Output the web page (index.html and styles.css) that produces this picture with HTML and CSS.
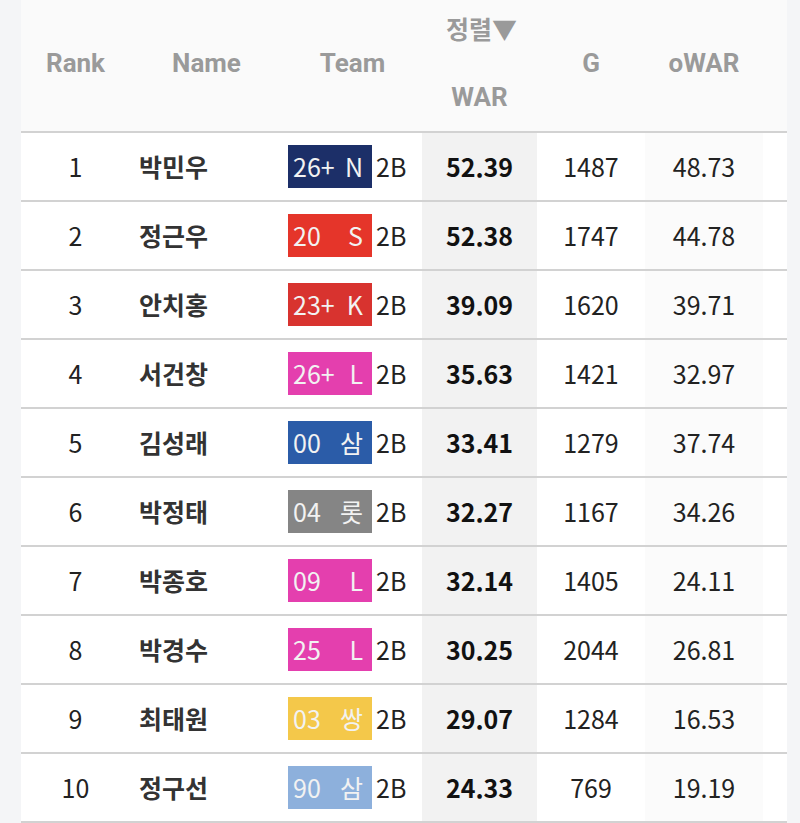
FILE: index.html
```html
<!DOCTYPE html>
<html lang="ko">
<head>
<meta charset="utf-8">
<link rel="stylesheet" href="styles.css">
</head>
<body>
<div class="board">
  <div class="row head">
    <div class="c rank">Rank</div>
    <div class="c name">Name</div>
    <div class="c team">Team</div>
    <div class="c war"><span class="sort">정렬▼</span><span>WAR</span></div>
    <div class="c g">G</div>
    <div class="c owar">oWAR</div>
    <div class="c pad"></div>
  </div>
  <div class="row"><div class="c rank">1</div><div class="c name">박민우</div><div class="c team"><span class="badge nc"><span class="num">26+</span><span>N</span></span><span class="pos">2B</span></div><div class="c war">52.39</div><div class="c g">1487</div><div class="c owar">48.73</div><div class="c pad"></div></div>
  <div class="row"><div class="c rank">2</div><div class="c name">정근우</div><div class="c team"><span class="badge sk"><span class="num">20</span><span>S</span></span><span class="pos">2B</span></div><div class="c war">52.38</div><div class="c g">1747</div><div class="c owar">44.78</div><div class="c pad"></div></div>
  <div class="row"><div class="c rank">3</div><div class="c name">안치홍</div><div class="c team"><span class="badge kia"><span class="num">23+</span><span>K</span></span><span class="pos">2B</span></div><div class="c war">39.09</div><div class="c g">1620</div><div class="c owar">39.71</div><div class="c pad"></div></div>
  <div class="row"><div class="c rank">4</div><div class="c name">서건창</div><div class="c team"><span class="badge lg"><span class="num">26+</span><span>L</span></span><span class="pos">2B</span></div><div class="c war">35.63</div><div class="c g">1421</div><div class="c owar">32.97</div><div class="c pad"></div></div>
  <div class="row"><div class="c rank">5</div><div class="c name">김성래</div><div class="c team"><span class="badge ss"><span class="num">00</span><span>삼</span></span><span class="pos">2B</span></div><div class="c war">33.41</div><div class="c g">1279</div><div class="c owar">37.74</div><div class="c pad"></div></div>
  <div class="row"><div class="c rank">6</div><div class="c name">박정태</div><div class="c team"><span class="badge lt"><span class="num">04</span><span>롯</span></span><span class="pos">2B</span></div><div class="c war">32.27</div><div class="c g">1167</div><div class="c owar">34.26</div><div class="c pad"></div></div>
  <div class="row"><div class="c rank">7</div><div class="c name">박종호</div><div class="c team"><span class="badge lg"><span class="num">09</span><span>L</span></span><span class="pos">2B</span></div><div class="c war">32.14</div><div class="c g">1405</div><div class="c owar">24.11</div><div class="c pad"></div></div>
  <div class="row"><div class="c rank">8</div><div class="c name">박경수</div><div class="c team"><span class="badge lg"><span class="num">25</span><span>L</span></span><span class="pos">2B</span></div><div class="c war">30.25</div><div class="c g">2044</div><div class="c owar">26.81</div><div class="c pad"></div></div>
  <div class="row"><div class="c rank">9</div><div class="c name">최태원</div><div class="c team"><span class="badge sb"><span class="num">03</span><span>쌍</span></span><span class="pos">2B</span></div><div class="c war">29.07</div><div class="c g">1284</div><div class="c owar">16.53</div><div class="c pad"></div></div>
  <div class="row"><div class="c rank">10</div><div class="c name">정구선</div><div class="c team"><span class="badge ss2"><span class="num">90</span><span>삼</span></span><span class="pos">2B</span></div><div class="c war">24.33</div><div class="c g">769</div><div class="c owar">19.19</div><div class="c pad"></div></div>
</div>
</body>
</html>
```
FILE: styles.css
```css
html, body {
  margin: 0;
  padding: 0;
  background: #f4f5f7;
}
body {
  font-family: "Noto Sans CJK KR", "Noto Sans", sans-serif;
  color: #222;
  font-size: 25px;
}
.board {
  margin-left: 21px;
  width: 766px;
  background: #fff;
}
.row {
  display: grid;
  grid-template-columns: 109px 153px 139px 115px 108px 118px 24px;
  height: 67px;
  border-bottom: 2px solid #d2d2d2;
  background: #fff;
}
.c {
  display: flex;
  align-items: center;
  justify-content: center;
  line-height: 1;
}
.row .name {
  justify-content: flex-start;
  padding-left: 9px;
  font-weight: 700;
  color: #333;
}
.row .team {
  justify-content: flex-start;
  padding-left: 5px;
}
.row .war {
  background: #f2f2f2;
  font-weight: 700;
  color: #111;
}
.row .owar {
  background: #fbfbfb;
}
.head {
  height: 131px;
  background: #fafafa;
}
.head .c {
  font-family: Roboto, "Noto Sans CJK KR", sans-serif;
  font-weight: 700;
  color: #9a9a9a;
  font-size: 26px;
  background: #fafafa;
  padding-left: 0;
  padding-bottom: 5px;
  box-sizing: border-box;
}
.head .name {
  justify-content: center;
  padding-left: 0;
  font-weight: 700;
  color: #9a9a9a;
}
.head .team {
  justify-content: center;
  padding-left: 0;
}
.head .war {
  flex-direction: column;
  justify-content: space-between;
  padding: 16px 0 21px;
  color: #9a9a9a;
}
.head .sort {
  font-family: "Noto Sans CJK KR", sans-serif;
  font-weight: 700;
  font-size: 25px;
  margin-left: 4px;
}
.badge {
  display: flex;
  align-items: center;
  justify-content: space-between;
  width: 84px;
  height: 43px;
  box-sizing: border-box;
  padding: 0 9px 0 5px;
  color: #f2f2f2;
  font-size: 25px;
}
.pos {
  margin-left: 4px;
}
.nc { background: #1c2f68; }
.sk { background: #e5352a; }
.kia { background: #d8332f; }
.lg { background: #e43fae; }
.ss { background: #2b5ca8; }
.lt { background: #858585; }
.sb { background: #f4c84a; }
.ss2 { background: #8db0dc; }
```
